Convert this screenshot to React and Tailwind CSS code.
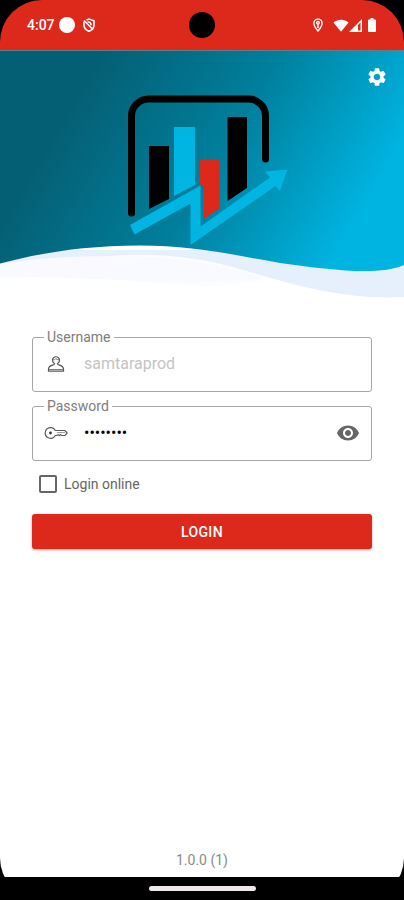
import React, { useState } from 'react';
import { MdSettings, MdVisibility, MdVisibilityOff } from 'react-icons/md';

const StatusBar = () => (
  <div className="flex h-[50px] shrink-0 items-center justify-between bg-[#dc291c] px-[27px] text-white">
    <div className="flex flex-1 items-center">
      <span className="text-sm font-medium">4:07</span>
      <span className="ml-1 h-4 w-4 rounded-full bg-white"></span>
      <svg className="ml-[7px] h-[14px] w-[14px]" viewBox="0 0 14 14" fill="none" stroke="currentColor" strokeWidth="1.6">
        <path d="M4.5 1.9 7 1l5 1.8v4.4c0 2.8-2 4.8-5 6.1-3-1.3-5-3.3-5-6.1V3.5" />
        <path d="M2 2.5l8.5 8.5" />
        <path d="M5.5 4.2c2-.6 3.6.6 3.6 3" />
      </svg>
    </div>
    <span className="h-[26px] w-[26px] rounded-full bg-black"></span>
    <div className="flex flex-1 items-center justify-end">
      <svg className="mr-[9px] h-[14px] w-3" viewBox="0 0 12 14" fill="none" stroke="currentColor" strokeWidth="1.4">
        <path d="M6 13C3.5 10 1.9 7.8 1.9 5.2a4.1 4.1 0 0 1 8.2 0C10.1 7.800 8.500 10 6 13z" />
        <circle cx="6" cy="4.8" r="1.3" />
        <path d="M6 6v4" />
      </svg>
      <svg className="h-[13px] w-4" viewBox="0 0 16 13" fill="currentColor">
        <path d="M.5 3.5C4.8-.3 11.2-.3 15.5 3.5L8 12.8z" />
      </svg>
      <svg className="h-[13px] w-[13px]" viewBox="0 0 13 13" fill="currentColor">
        <path fillRule="evenodd" d="M0 13 13 0v13zM9 6v5.500h2.500V3.500z" />
      </svg>
      <svg className="ml-[5px] h-[14px] w-[10px]" viewBox="0 0 10 14" fill="currentColor">
        <path d="M3.500 0h3v1.500H8a1 1 0 0 1 1 1V13a1 1 0 0 1-1 1H2a1 1 0 0 1-1-1V2.500a1 1 0 0 1 1-1h1.500z" />
      </svg>
    </div>
  </div>
);

const Waves = () => (
  <svg className="absolute inset-0 h-full w-full" viewBox="0 0 404 250" preserveAspectRatio="none">
    <defs>
      <linearGradient id="sea" gradientUnits="userSpaceOnUse" x1="77" y1="45" x2="340" y2="200">
        <stop offset="0" stopColor="#055f74" />
        <stop offset="0.5" stopColor="#007f9c" />
        <stop offset="1" stopColor="#00b4e1" />
      </linearGradient>
    </defs>
    <path fill="#fcfdff" d="M0 200H280V226C240 238 200 238 160 234C110 228 50 224 0 229z" />
    <path fill="#e6effc" d="M0 200H404V247C350 250 300 237 250 222C190 203 140 202 90 208C60 211 30 216 0 222z" />
    <path fill="#f8faff" d="M0 214C50 206 90 206 130 206.5C190 207 230 217 262 228C200 239 110 226 0 227z" />
    <path fill="url(#sea)" d="M0 0H404V215C380 226 330 220 280 213C230 204 190 195.5 140 195.5C85 195.5 40 203 0 213.5z" />
    <path d="M0 .5H404" stroke="#5d7f8b" />
  </svg>
);

const Logo = () => (
  <svg className="h-[152px] w-[174px]" viewBox="-10 0 174 152">
    <path
      d="M6.5 118V21A17 17 0 0 1 23.500 4H123.500A17 17 0 0 1 140.500 21V64"
      fill="none"
      stroke="#000"
      strokeWidth="7"
      strokeLinecap="round"
    />
    <path d="M24 51H44V104L24 114z" />
    <path d="M49 32H70V90L49 101z" fill="#00b5e2" />
    <path d="M75 64.5H95V113L78.5 124V92L75 89z" fill="#dc291c" />
    <path d="M102.5 22H122V93L102.5 106z" />
    <path
      d="M5 130 75.5 90.5V131.5L145 82.5 140 76.5 162.5 74.5 155 96 150.5 91 65.5 150V108.5L9.5 139.5z"
      fill="#00b5e2"
    />
  </svg>
);

const UserIcon = () => (
  <svg className="h-6 w-6" viewBox="0 0 24 24" fill="none" stroke="#5a5a5a" strokeWidth="1.2">
    <path d="M10.3 11.3a3.5 3.5 0 1 1 3.4 0c-.3.8 0 1.300 1.100 1.600 3.100.8 4.700 2 4.700 4.100v2.200h-15V17c0-2.100 1.600-3.300 4.700-4.100 1.100-.3 1.400-.8 1.100-1.600z" />
    <path d="M8.800 7.800c1.500.3 2.500-.3 3-1.200.7.900 1.800 1.300 3.400 1.200" strokeWidth=".8" />
    <path d="M4.500 17.500h15" strokeWidth=".8" />
  </svg>
);

const KeyIcon = () => (
  <svg className="h-6 w-6" viewBox="0 0 24 24" fill="none" stroke="#5a5a5a" strokeWidth="1.2">
    <path d="M11.3 9.5A5.400 5.400 0 1 0 11.300 14.500H13l1.200-.8 1.200.8 1.200-.8 1.200.8h3.200L23.200 12l-2.200-2.500z" />
    <path d="M13 11.500h8" strokeWidth=".6" />
    <circle cx="6.5" cy="12" r="1.4" fill="#333" stroke="none" />
  </svg>
);

const Field = ({ id, label, icon, children }) => (
  <fieldset className="rounded-[3px] border border-[#a6a6a6] px-[11px] pb-[11px]">
    <legend className="h-5 px-[3px] text-sm leading-5 text-[#7d7d7d]">
      <label htmlFor={id}>{label}</label>
    </legend>
    <div className="flex h-[33px] items-center gap-4">
      {icon}
      {children}
    </div>
  </fieldset>
);

const App = () => {
  const [username, setUsername] = useState('');
  const [password, setPassword] = useState('samtara1');
  const [showPassword, setShowPassword] = useState(false);
  const [online, setOnline] = useState(false);

  return (
    <div className="min-h-screen bg-black font-[Roboto,sans-serif]">
      <div className="flex min-h-screen flex-col overflow-hidden rounded-[42px]">
        <StatusBar />

        <header className="relative h-[250px] shrink-0 bg-white">
          <Waves />
          <div className="relative flex justify-center pt-[45px]">
            <Logo />
          </div>
          <button type="button" aria-label="Settings" className="absolute right-4 top-4 text-white">
            <MdSettings className="h-[22px] w-[22px]" />
          </button>
        </header>

        <main className="flex flex-1 flex-col bg-white px-8 pt-[27px]">
          <form onSubmit={(e) => e.preventDefault()}>
            <div className="space-y-1">
              <Field id="username" label="Username" icon={<UserIcon />}>
                <input
                  id="username"
                  type="text"
                  placeholder="samtaraprod"
                  value={username}
                  onChange={(e) => setUsername(e.target.value)}
                  className="min-w-0 flex-1 text-base text-black outline-none placeholder:text-[#c4c4c4]"
                />
              </Field>
              <Field id="password" label="Password" icon={<KeyIcon />}>
                <input
                  id="password"
                  type={showPassword ? 'text' : 'password'}
                  value={password}
                  onChange={(e) => setPassword(e.target.value)}
                  className="min-w-0 flex-1 text-base text-black outline-none"
                />
                <button
                  type="button"
                  aria-label="Toggle password"
                  onClick={() => setShowPassword(!showPassword)}
                  className="text-[#666]"
                >
                  {showPassword ? <MdVisibilityOff className="h-6 w-6" /> : <MdVisibility className="h-6 w-6" />}
                </button>
              </Field>
            </div>

            <label className="ml-[7px] mt-[14px] flex w-fit items-center gap-[7px] text-sm leading-[18px] text-[#666]">
              <input
                type="checkbox"
                checked={online}
                onChange={(e) => setOnline(e.target.checked)}
                className="h-[18px] w-[18px] appearance-none rounded-[2px] border-2 border-[#666] checked:bg-[#dc291c]"
              />
              Login online
            </label>

            <button
              type="submit"
              className="mt-[21px] h-[35px] w-full rounded-[3px] bg-[#dc291c] text-sm font-medium tracking-wide text-white shadow-sm shadow-black/30"
            >
              LOGIN
            </button>
          </form>

          <p className="mt-auto pb-[7px] text-center text-sm text-[#8a8a8a]">1.0.0 (1)</p>
        </main>

        <div className="flex h-[23px] shrink-0 justify-center bg-black pt-[9px]">
          <span className="h-[5px] w-[107px] rounded-full bg-[#eeeaea]"></span>
        </div>
      </div>
    </div>
  );
};

export default App;
